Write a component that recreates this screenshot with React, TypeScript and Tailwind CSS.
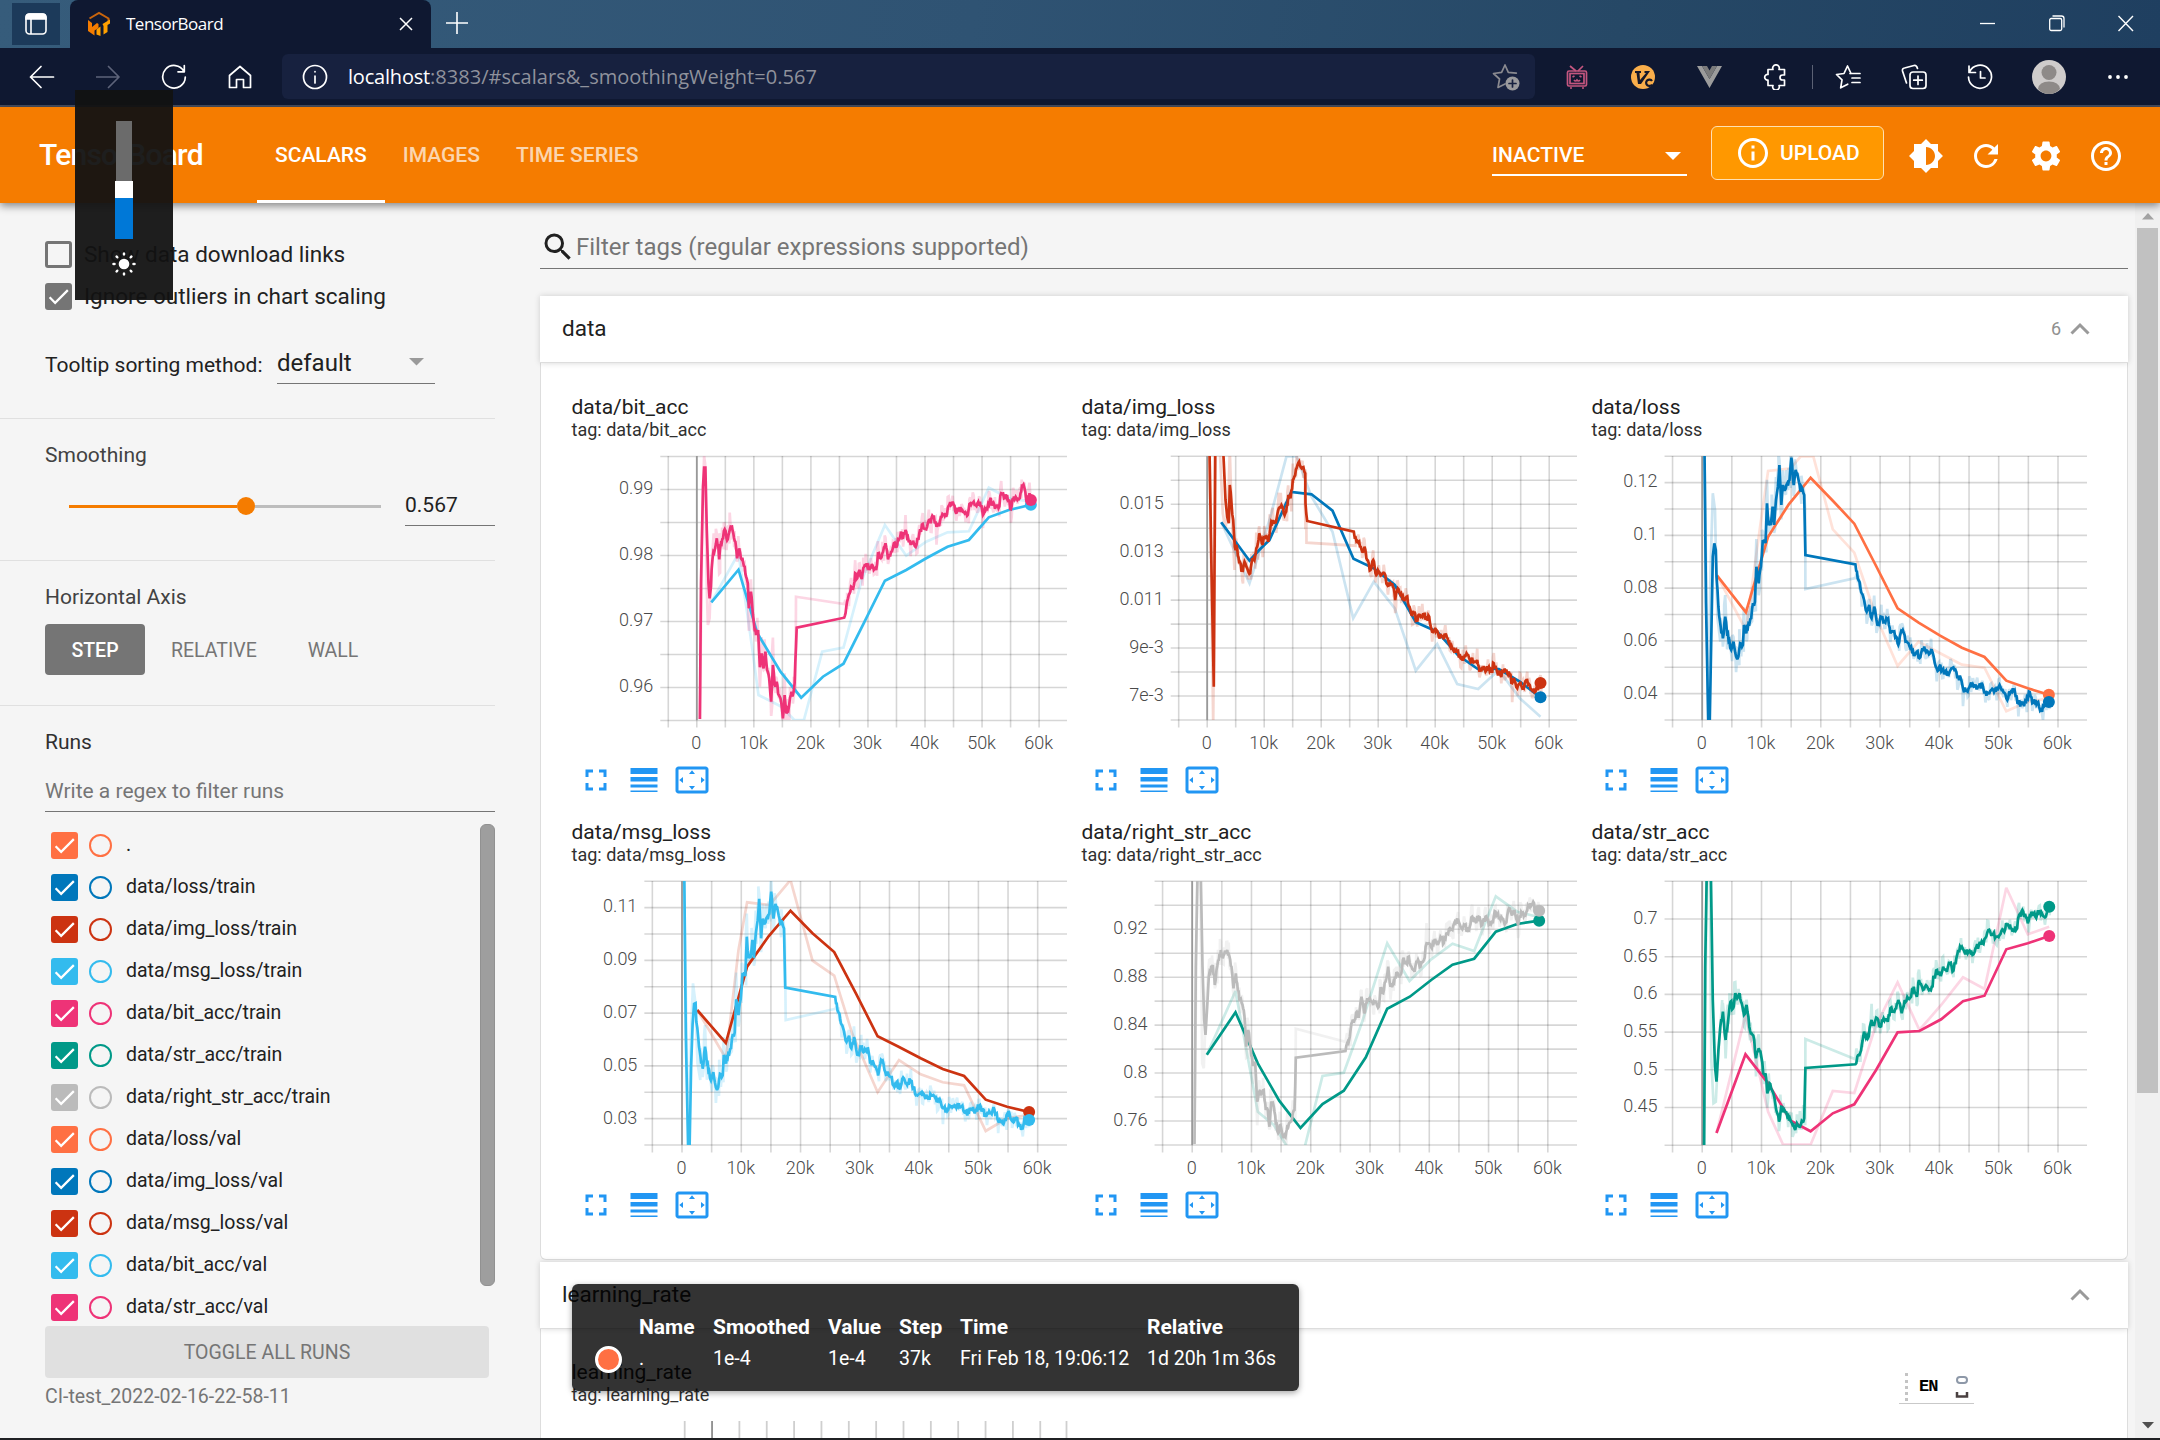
import React from "react";
import {
  MdBrightness6,
  MdCheck,
  MdFullscreen,
  MdHelpOutline,
  MdInfoOutline,
  MdLineWeight,
  MdRefresh,
  MdSearch,
  MdSettings,
  MdSettingsOverscan,
} from "react-icons/md";

type Pt = [number, number];

const ORANGE = "#ff7043";
const BLUE = "#0077bb";
const RED = "#cc3311";
const CYAN = "#33bbee";
const PINK = "#ee3377";
const TEAL = "#009988";
const GREY = "#bbbbbb";

/* ---------- series data ---------- */

const bitTrain: Pt[] = [[463,1047],[466,640],[472,350],[475,293],[479,293],[483,480],[488,640],[491,685],[495,650],[497,600],[502,545],[507,535],[512,505],[516,525],[519,568],[524,520],[530,505],[535,478],[540,505],[546,495],[552,470],[556,470],[560,490],[566,515],[571,565],[577,535],[582,565],[588,575],[593,590],[597,620],[602,640],[605,715],[611,665],[617,735],[622,780],[626,795],[632,780],[637,892],[642,850],[648,895],[653,845],[658,900],[664,925],[670,995],[675,885],[680,945],[686,935],[692,975],[697,985],[704,1045],[709,975],[714,1030],[720,1020],[727,975],[733,975],[738,940],[744,773],[882,743],[888,710],[893,685],[902,650],[908,655],[914,610],[920,625],[927,600],[933,627],[940,590],[947,580],[955,600],[962,582],[968,600],[975,600],[980,550],[988,565],[995,545],[1002,520],[1009,568],[1018,545],[1026,520],[1034,530],[1040,510],[1047,485],[1053,503],[1060,480],[1067,500],[1075,525],[1082,512],[1092,525],[1100,490],[1110,462],[1120,478],[1128,450],[1133,460],[1140,440],[1150,470],[1160,455],[1167,432],[1178,440],[1185,408],[1197,395],[1205,425],[1215,418],[1225,420],[1232,430],[1241,435],[1248,400],[1258,395],[1266,408],[1276,395],[1285,435],[1295,415],[1305,390],[1313,400],[1322,410],[1330,415],[1338,370],[1346,385],[1355,375],[1366,418],[1375,380],[1385,390],[1394,370],[1400,348],[1408,365],[1413,395],[1420,370],[1425,392]];
const bitVal: Pt[] = [[496,697],[575,599],[630,790],[697,905],[757,983],[820,920],[880,881],[940,757],[1000,632],[1062,600],[1120,565],[1182,530],[1244,510],[1302,442],[1360,420],[1424,404]];
const bitValRaw: Pt[] = [[496,697],[575,550],[610,800],[633,975],[700,1010],[737,1050],[765,1050],[818,845],[880,833],[933,630],[1000,465],[1062,557],[1120,515],[1182,487],[1244,484],[1302,353],[1360,385],[1424,395]];

const imgTrain: Pt[] = [[447,240],[453,600],[460,950],[464,240],[488,240],[495,390],[500,440],[505,460],[508,345],[513,400],[518,450],[523,530],[530,535],[536,580],[545,600],[552,575],[560,595],[569,610],[575,565],[582,570],[590,530],[596,490],[604,520],[614,500],[623,515],[630,470],[637,450],[645,460],[655,415],[663,405],[670,430],[677,425],[683,380],[690,385],[697,330],[704,315],[711,285],[718,285],[726,292],[734,310],[735,400],[740,453],[880,485],[888,515],[896,515],[905,545],[912,530],[920,570],[930,600],[938,570],[945,610],[955,605],[963,615],[972,610],[980,645],[990,640],[1000,655],[1004,690],[1012,655],[1022,670],[1030,690],[1038,680],[1047,710],[1055,735],[1062,725],[1068,750],[1078,735],[1088,730],[1097,745],[1106,740],[1115,785],[1125,785],[1135,800],[1145,800],[1157,795],[1168,825],[1178,840],[1188,840],[1200,865],[1210,865],[1218,850],[1228,870],[1240,875],[1250,870],[1257,905],[1265,890],[1275,905],[1285,890],[1293,905],[1300,880],[1310,905],[1320,915],[1330,905],[1345,905],[1355,940],[1362,930],[1370,955],[1380,935],[1390,955],[1400,930],[1408,945],[1415,960],[1425,965],[1440,940]];
const imgVal: Pt[] = [[482,457],[567,572],[596,540],[627,510],[692,366],[753,373],[816,422],[879,566],[940,595],[1003,645],[1066,757],[1130,785],[1192,855],[1252,897],[1315,897],[1378,935],[1440,982]];
const imgValRaw: Pt[] = [[482,457],[567,640],[627,450],[678,259],[708,259],[753,380],[816,485],[878,745],[940,635],[1003,715],[1066,902],[1130,822],[1190,942],[1253,957],[1315,900],[1378,985],[1440,1040]];

const lossTrain: Pt[] = [[356,240],[360,700],[366,1047],[370,1047],[374,800],[378,560],[382,520],[386,540],[388,620],[393,710],[399,770],[405,805],[411,740],[416,790],[422,810],[427,840],[433,815],[440,860],[446,860],[451,820],[458,825],[461,765],[467,790],[473,760],[480,745],[485,700],[490,695],[494,590],[500,640],[506,590],[511,510],[518,520],[522,400],[527,465],[532,465],[537,410],[541,465],[546,390],[551,350],[555,285],[560,405],[565,345],[570,360],[576,340],[582,330],[587,263],[593,345],[598,300],[605,325],[611,365],[616,355],[621,375],[624,555],[757,583],[763,625],[768,635],[774,670],[780,690],[787,725],[794,705],[800,745],[807,710],[813,750],[820,765],[826,740],[834,755],[844,745],[850,790],[858,785],[865,800],[871,825],[877,790],[883,780],[890,815],[898,820],[905,830],[912,855],[920,845],[927,865],[935,835],[942,840],[950,845],[958,840],[965,860],[973,895],[980,890],[988,900],[995,905],[1003,910],[1012,895],[1020,900],[1028,925],[1037,925],[1043,955],[1055,965],[1062,945],[1072,950],[1083,950],[1095,945],[1100,970],[1110,970],[1118,960],[1130,965],[1140,945],[1148,960],[1158,985],[1168,970],[1180,960],[1190,1000],[1200,1000],[1210,1000],[1218,965],[1227,1000],[1236,990],[1245,1010],[1253,1025],[1262,995],[1271,995]];
const lossVal: Pt[] = [[389,616],[466,727],[525,500],[580,403],[638,323],[697,392],[754,461],[812,588],[869,715],[925,758],[982,797],[1040,833],[1100,861],[1158,932],[1215,955],[1271,974]];
const lossValRaw: Pt[] = [[389,616],[466,780],[505,460],[525,303],[585,295],[612,259],[645,259],[697,478],[754,548],[812,740],[869,888],[925,815],[982,850],[1040,884],[1100,893],[1158,1024],[1215,995],[1271,985]];

const msgLevels: Pt[] = [[240,225],[263,275],[400,410],[555,563],[583,591],[745,745],[860,862],[950,920],[1025,985],[1047,1040]];
const relevel = (v: number) => {
  for (let i = 1; i < msgLevels.length; i++) {
    const [a, b] = msgLevels[i - 1];
    const [c, d] = msgLevels[i];
    if (v <= c) return b + ((v - a) / (c - a)) * (d - b);
  }
  return v;
};
/* msg_loss follows the shape of the total loss, apart from the first rebound */
const msgTrain: Pt[] = lossTrain.map(([x, y], i) => [411 + (x - 350) * 1.093, relevel(y) + (i >= 5 && i <= 8 ? 105 - (i - 5) * 22 : 0)]);
const msgVal: Pt[] = [[455,630],[538,729],[600,500],[663,408],[726,332],[790,400],[853,456],[916,580],[979,709],[1040,740],[1104,775],[1168,807],[1230,828],[1293,899],[1355,920],[1419,936]];
const msgValRaw: Pt[] = [[455,630],[538,775],[575,450],[600,307],[665,315],[726,240],[790,482],[853,527],[905,700],[979,877],[1041,780],[1104,823],[1168,847],[1230,856],[1293,993],[1355,955],[1419,945]];

const rightTrain: Pt[] = [[402,1032],[406,500],[411,225],[421,225],[426,500],[431,660],[435,705],[440,620],[445,530],[452,500],[457,495],[463,555],[468,510],[475,480],[481,450],[487,475],[493,455],[500,450],[507,470],[513,500],[519,565],[526,520],[532,570],[539,600],[546,615],[552,650],[557,740],[563,690],[570,740],[577,795],[584,790],[590,905],[596,875],[604,880],[610,870],[616,930],[622,930],[627,980],[632,905],[640,920],[646,970],[653,1000],[660,975],[667,1005],[675,1010],[681,975],[690,965],[697,940],[702,930],[706,773],[855,753],[862,725],[868,710],[875,665],[882,660],[889,635],[895,650],[903,590],[911,640],[920,595],[930,600],[938,615],[945,605],[955,620],[960,565],[968,580],[975,545],[983,500],[990,560],[997,555],[1003,530],[1012,520],[1020,525],[1027,480],[1037,490],[1045,470],[1053,500],[1062,515],[1070,485],[1080,500],[1090,480],[1098,430],[1106,430],[1114,445],[1122,420],[1130,435],[1140,410],[1150,430],[1160,400],[1168,385],[1176,390],[1183,365],[1195,365],[1203,385],[1213,375],[1225,395],[1235,350],[1245,365],[1255,350],[1265,375],[1275,350],[1285,375],[1295,365],[1305,335],[1315,355],[1325,355],[1335,370],[1343,330],[1352,340],[1362,330],[1373,375],[1382,335],[1392,345],[1400,330],[1410,310],[1418,305],[1425,330],[1436,332]];
const rightVal: Pt[] = [[439,764],[525,637],[592,790],[656,902],[720,984],[786,912],[850,872],[916,772],[980,626],[1048,590],[1112,540],[1176,494],[1241,476],[1306,395],[1370,372],[1436,362]];
const rightValRaw: Pt[] = [[439,764],[525,573],[592,935],[640,975],[680,1040],[733,1040],[786,828],[850,818],[905,665],[980,430],[1047,543],[1112,478],[1176,431],[1241,453],[1306,289],[1370,335],[1436,352]];

const strTrain: Pt[] = [[355,1040],[358,500],[362,225],[373,225],[378,600],[384,800],[388,845],[393,750],[398,680],[405,635],[412,720],[418,670],[425,605],[432,625],[438,580],[443,595],[449,580],[455,610],[461,645],[468,615],[475,680],[481,700],[488,720],[493,775],[500,745],[507,770],[512,820],[518,820],[523,880],[529,850],[535,870],[542,895],[548,935],[554,965],[560,920],[568,930],[576,950],[583,955],[590,975],[597,990],[604,975],[612,975],[621,955],[624,804],[757,793],[762,770],[768,765],[774,735],[780,695],[790,715],[800,660],[807,675],[815,655],[823,680],[832,655],[843,665],[850,625],[858,635],[865,625],[871,600],[880,640],[888,600],[897,595],[905,590],[912,560],[920,590],[926,540],[934,560],[942,560],[950,565],[960,560],[966,530],[974,510],[982,525],[990,500],[1000,515],[1008,490],[1015,515],[1023,490],[1030,450],[1040,440],[1048,460],[1058,455],[1068,465],[1076,445],[1085,435],[1095,430],[1102,415],[1110,390],[1120,405],[1130,410],[1140,405],[1150,390],[1160,375],[1170,385],[1184,390],[1192,345],[1203,335],[1215,370],[1225,335],[1235,350],[1247,335],[1258,350],[1271,325]];
const strVal: Pt[] = [[388,999],[465,763],[525,850],[585,962],[638,994],[697,940],[754,913],[812,810],[869,697],[927,693],[985,658],[1043,604],[1100,587],[1158,448],[1215,430],[1272,408]];
const strValRaw: Pt[] = [[388,999],[465,645],[525,935],[565,1034],[638,1034],[697,873],[754,879],[810,680],[869,547],[927,690],[985,615],[1043,532],[1100,567],[1158,263],[1215,403],[1272,380]];

interface ChartSpec {
  name: string;
  /* horizontal samples per pixel, and the sample offset of the drawing */
  k: number;
  ox: number;
  oy: number;
  x0: number;
  step: number;
  gridY: number[];
  labels: [string, number][];
  train: Pt[];
  trainColor: string;
  rawHead: Pt[];
  rawFlat: Pt[];
  val: Pt[];
  valRaw: Pt[];
  valColor: string;
  trainEnd: Pt;
  valEnd: Pt;
}

const range = (n: number, a: number, d: number) => Array.from({ length: n }, (_, i) => a + i * d);

const charts: ChartSpec[] = [
  {
    name: "data/bit_acc", k: 2.904, ox: -31.5, oy: -86, x0: 124.8, step: 57.05,
    gridY: range(9, 0.5, 33), labels: [["0.99", 33], ["0.98", 99], ["0.97", 165], ["0.96", 231]],
    train: bitTrain, trainColor: PINK, rawHead: [[463,1047],[470,450],[475,259],[478,280],[483,660],[486,765],[491,745],[496,600],[503,490]], rawFlat: [[742,680],[882,702]],
    val: bitVal, valRaw: bitValRaw, valColor: CYAN, trainEnd: [1424,390], valEnd: [1424,404],
  },
  {
    name: "data/img_loss", k: 3, ox: -21.5, oy: -86, x0: 125.2, step: 57,
    gridY: range(12, 0.3, 23.97), labels: [["0.015", 48], ["0.013", 96], ["0.011", 144], ["9e-3", 192], ["7e-3", 240]],
    train: imgTrain, trainColor: RED, rawHead: [[447,240],[458,1060],[466,240],[478,240],[487,430],[495,480],[503,400],[508,240],[514,440],[522,600]], rawFlat: [[738,518],[885,527]],
    val: imgVal, valRaw: imgValRaw, valColor: BLUE, trainEnd: [1440,939], valEnd: [1440,982],
  },
  {
    name: "data/loss", k: 2.657, ox: -21.5, oy: -86, x0: 110.2, step: 59.3,
    gridY: range(11, 0.3, 26.37), labels: [["0.12", 26.4], ["0.1", 79.1], ["0.08", 132], ["0.06", 185], ["0.04", 237.6]],
    train: lossTrain, trainColor: BLUE, rawHead: [[356,240],[366,1047],[372,600],[378,370],[384,420],[390,740],[398,815]], rawFlat: [[624,657],[757,624]],
    val: lossVal, valRaw: lossValRaw, valColor: ORANGE, trainEnd: [1271,996], valEnd: [1271,974],
  },
  {
    name: "data/msg_loss", k: 2.904, ox: -31.5, oy: -81, x0: 110, step: 59.28,
    gridY: range(11, 0.3, 26.37), labels: [["0.11", 26.4], ["0.09", 79.1], ["0.07", 132], ["0.05", 185], ["0.03", 237.6]],
    train: msgTrain, trainColor: CYAN, rawHead: [[416,225],[430,1040],[437,700],[443,550],[449,600],[456,790],[464,840]], rawFlat: [[712,660],[857,626]],
    val: msgVal, valRaw: msgValRaw, valColor: RED, trainEnd: [1419,960], valEnd: [1419,936],
  },
  {
    name: "data/right_str_acc", k: 3, ox: -21.5, oy: -81, x0: 110.2, step: 59.27,
    gridY: range(12, 0.3, 23.97), labels: [["0.92", 48], ["0.88", 96], ["0.84", 144], ["0.8", 192], ["0.76", 240]],
    train: rightTrain, trainColor: GREY, rawHead: [[402,1032],[410,225],[419,225],[425,790],[430,805],[437,600],[446,480]], rawFlat: [[706,686],[855,725]],
    val: rightVal, valRaw: rightValRaw, valColor: TEAL, trainEnd: [1436,332], valEnd: [1436,362],
  },
  {
    name: "data/str_acc", k: 2.657, ox: -21.5, oy: -81, x0: 110.2, step: 59.3,
    gridY: range(8, 0.3, 37.7), labels: [["0.7", 37.8], ["0.65", 75.5], ["0.6", 113.2], ["0.55", 151], ["0.5", 188.6], ["0.45", 226.4]],
    train: strTrain, trainColor: TEAL, rawHead: [[355,1040],[362,225],[370,225],[374,780],[380,910],[386,905],[392,780],[403,600]], rawFlat: [[624,717],[757,778]],
    val: strVal, valRaw: strValRaw, valColor: PINK, trainEnd: [1272,320], valEnd: [1272,408],
  },
];

/* small seeded generator, so that every render draws the same noise */
const rng = (seed: number) => () => {
  seed = (seed * 1664525 + 1013904223) >>> 0;
  return seed / 4294967296;
};

function jitter(pts: Pt[], amp: number, seed: number, skipTo: number): Pt[] {
  const rand = rng(seed);
  const out: Pt[] = [];
  for (let i = 0; i < pts.length - 1; i++) {
    const [x1, y1] = pts[i];
    const [x2, y2] = pts[i + 1];
    out.push([x1, y1]);
    const gap = x2 - x1;
    if (gap > 60 || x1 < skipTo) continue;
    const n = Math.max(1, Math.round(gap / 2.4));
    for (let j = 1; j < n; j++) {
      const t = j / n;
      const r = (rand() - 0.5) * 2;
      out.push([x1 + gap * t, y1 + (y2 - y1) * t + r * amp]);
    }
  }
  out.push(pts[pts.length - 1]);
  return out;
}

function rawOf(c: ChartSpec): Pt[] {
  const headEnd = c.rawHead[c.rawHead.length - 1][0];
  const jump = c.train.findIndex((p, i) => i + 1 < c.train.length && c.train[i + 1][0] - p[0] > 60);
  const before = c.train.slice(0, jump).filter((p) => p[0] > headEnd);
  const after = c.train.slice(jump + 2);
  const rand = rng(91);
  const spread = (pts: Pt[], amp: number): Pt[] =>
    pts.flatMap(([x, y], i): Pt[] => {
      const prev = pts[i - 1]?.[1] ?? y;
      const push = (y - prev) * 0.6;
      const spike = rand() > 0.86 ? 2 : 1;
      return [
        [x - 2.5, y - rand() * amp * 0.7],
        [x, y + push + (rand() - 0.5) * amp * spike],
        [x + 2.5, y + rand() * amp * 0.7],
      ];
    });
  return [...c.rawHead, ...spread(before, 62), ...c.rawFlat, ...spread(after, 42)];
}

function Chart({ c }: { c: ChartSpec }) {
  const X = (x: number) => x / c.k + c.ox;
  const Y = (y: number) => y / 3 + c.oy;
  const path = (pts: Pt[]) => pts.map(([x, y], i) => `${i ? "L" : "M"}${X(x).toFixed(1)} ${Y(y).toFixed(1)}`).join("");
  const left = c.x0 - c.step / 2;
  const id = `clip-${c.name.replace(/\W/g, "-")}`;
  const sets = [
    { p: path(c.valRaw), color: c.valColor, o: 0.2 },
    { p: path(rawOf(c)), color: c.trainColor, o: 0.2 },
    { p: path(c.val), color: c.valColor, o: 1 },
    { p: path(jitter(c.train, 10, 7, c.train[8][0])), color: c.trainColor, o: 1 },
  ];
  return (
    <svg width="510" height="304" className="block overflow-visible">
      <defs>
        <clipPath id={id}>
          <rect x={left} y="0" width={495 - left} height="264" />
        </clipPath>
      </defs>
      <g stroke="#000" strokeOpacity="0.16" strokeWidth="1.6">
        {c.gridY.map((y) => (
          <line key={y} x1={left - 8} x2={495} y1={y} y2={y} />
        ))}
        {range(14, 0, 1).map((i) => (
          <line key={i} x1={Math.min(left + (i * c.step) / 2, 494.5)} x2={Math.min(left + (i * c.step) / 2, 494.5)} y1="0" y2="271.5" />
        ))}
      </g>
      <line x1={c.x0} x2={c.x0} y1="0" y2="264" stroke="#999" strokeWidth="1.8" />
      <g clipPath={`url(#${id})`} fill="none" strokeWidth="2.7" strokeLinejoin="miter" strokeMiterlimit="3">
        {sets.map((s, i) => (
          <path key={i} d={s.p} stroke={s.color} strokeOpacity={s.o} />
        ))}
      </g>
      <circle cx={X(c.valEnd[0])} cy={Y(c.valEnd[1])} r="6" fill={c.valColor} />
      <circle cx={X(c.trainEnd[0])} cy={Y(c.trainEnd[1])} r="6" fill={c.trainColor} />
      <g fill="#4a4a4a" fontSize="18" fontWeight="300" fontFamily="Roboto, sans-serif">
        {c.labels.map(([t, y]) => (
          <text key={t} x={left - 15} y={y + 5} textAnchor="end">{t}</text>
        ))}
        {range(7, 0, 1).map((i) => (
          <text key={i} x={c.x0 - 0.5 + i * c.step} y="292.5" textAnchor="middle">{i ? `${i}0k` : "0"}</text>
        ))}
      </g>
    </svg>
  );
}

function ChartCard({ c }: { c: ChartSpec }) {
  return (
    <div className="h-[425px] w-[510px]">
      <div className="h-[27px] text-[21px] leading-[27px] text-[#212121]">{c.name}</div>
      <div className="h-[35px] text-[18px] leading-[18px] text-[#303030]">tag: {c.name}</div>
      <Chart c={c} />
      <div className="mt-[2px] ml-[6px] flex gap-[12px] text-[36px] text-[#2196f3]">
        <MdFullscreen />
        <MdLineWeight />
        <MdSettingsOverscan />
      </div>
    </div>
  );
}

/* ---------- browser frame ---------- */

function BrowserTabs() {
  return (
    <div className="flex h-12 items-start bg-[linear-gradient(100deg,#365c7b_0%,#2f5373_45%,#264866_75%,#1f3f60_100%)] text-white">
      <div className="mt-[3px] ml-3 flex h-[42px] w-12 items-center justify-center bg-[#1c3a5a]">
        <svg width="24" height="24" viewBox="0 0 24 24" fill="none" stroke="#fff" strokeWidth="1.6">
          <rect x="2" y="2" width="20" height="20" rx="3.5" />
          <path d="M2 7V5.500Q2 2 5.500 2h13Q22 2 22 5.500V7z" fill="#fff" />
          <path d="M7 7v15" />
        </svg>
      </div>
      <div className="ml-[10px] flex h-12 w-[361px] items-center rounded-t-lg bg-[#0f1831] pl-[17px]">
        <svg width="24" height="26" viewBox="0 0 24 26">
          <path d="M2.500 7.500 12 2l9.500 5.500v3" fill="none" stroke="#c8640c" strokeWidth="2" />
          <path d="M1 9l4 3v4l5-4 1.500 1v4l-4 2.500v5L1 20z" fill="#f57c00" />
          <path d="M9.500 18.500l4-3V25l-4-1.500zM15.500 13 23 8.500v4l-2.500 1.500v7l-4 2.500V15z" fill="#ffa000" />
        </svg>
        <span className="ml-[15px] w-[260px] font-['Open_Sans'] text-[17px] tracking-[-0.5px]">TensorBoard</span>
        <svg className="ml-[13px]" width="14" height="14" viewBox="0 0 14 14" stroke="#fff" strokeWidth="1.500">
          <path d="M1 1l12 12M13 1L1 13" />
        </svg>
      </div>
      <svg className="mt-[12px] ml-[15px]" width="22" height="22" viewBox="0 0 22 22" stroke="#fff" strokeWidth="1.600">
        <path d="M11 0v22M0 11h22" />
      </svg>
      <div className="mt-[15px] ml-auto mr-[26px] flex gap-[53px]">
        <svg width="16" height="17" viewBox="0 0 16 17" stroke="#fff" strokeWidth="1.300"><path d="M0 8.500h15" /></svg>
        <svg width="16" height="17" viewBox="0 0 16 17" fill="none" stroke="#fff" strokeWidth="1.300">
          <rect x="0.700" y="3.500" width="12" height="12" rx="1.500" />
          <path d="M3.500 1h9Q15 1 15 3.500v9" />
        </svg>
        <svg width="16" height="17" viewBox="0 0 16 17" stroke="#fff" strokeWidth="1.400"><path d="M.500 1l14.500 15M15 1L.500 16" /></svg>
      </div>
    </div>
  );
}

const line = { fill: "none", stroke: "#fff", strokeWidth: 1.7, strokeLinecap: "round", strokeLinejoin: "round" } as const;

function BrowserBar() {
  return (
    <div className="flex h-[59px] items-center border-b-2 border-[#454c5e] bg-[#0f1831] pl-[29px]">
      <div className="flex w-[253px] items-center gap-[41px]">
        <svg width="26" height="24" viewBox="0 0 26 24" {...line}><path d="M24.500 12H1.500M12 1.500 1.500 12 12 22.500" /></svg>
        <svg width="24" height="24" viewBox="0 0 24 24" {...line} stroke="#5d6379"><path d="M0 12h22.500M12.500 1.500 23 12 12.500 22.500" /></svg>
        <svg width="26" height="26" viewBox="0 0 26 26" {...line}><path d="M23 7.500A11.300 11.300 0 1 0 24.300 13M23.300 1.500v6.300h-6.300" /></svg>
        <svg width="24" height="24" viewBox="0 0 24 24" {...line}><path d="M1.500 10.500 12 1.500l10.500 9v12h-7v-8h-7v8h-7z" /></svg>
      </div>
      <div className="flex h-[45px] w-[1253px] items-center rounded-md bg-[#17213f] pl-5 pr-[14px]">
        <svg width="26" height="26" viewBox="0 0 26 26" {...line}><circle cx="13" cy="13" r="11.500" /><path d="M13 12v7M13 7.500v.300" /></svg>
        <span className="ml-[20px] font-['Open_Sans'] text-[20px] tracking-[0.03px] text-[#8f929c]">
          <span className="tracking-[-0.2px] text-white">localhost</span>:8383/#scalars&amp;_smoothingWeight=0.567
        </span>
        <svg className="ml-auto" width="30" height="28" viewBox="0 0 30 28" {...line} stroke="#8a8a90">
          <path d="M14 2l3.300 7.300 8 .9M14 2l-3.400 7.300L2.500 10.500l6 5.500L7 24.500l7-3.500" />
          <circle cx="21.500" cy="20.500" r="7" fill="#9a9a9d" stroke="none" />
          <path d="M21.500 17v7M18 20.500h7" stroke="#17213f" />
        </svg>
      </div>
      <div className="ml-[29px] flex items-center">
        <svg width="26" height="26" viewBox="0 0 26 26" fill="none" stroke="#c4567f" strokeWidth="1.700">
          <path d="M6 2l6 5M19 2l-5 5" /><rect x="3.500" y="7" width="19" height="15" rx="1.500" /><rect x="6" y="9.500" width="14" height="10" />
          <path d="M8.500 13l2-1M17.500 13l-2-1M10 16q1.500 2 3 0 1.500 2 3 0M6 24h2M18 24h2" />
        </svg>
        <svg className="ml-[40px]" width="26" height="26" viewBox="0 0 26 26">
          <circle cx="13" cy="13" r="12" fill="#f9ae4b" />
          <path d="M5 7h6v2H9.500l.5 7L16 9h-1.500V7H20L11 20H8L6.500 9H5z" fill="#15182a" />
          <path d="M22 17a3.200 3.200 0 1 0 0 3.500" stroke="#15182a" strokeWidth="2.200" fill="none" />
        </svg>
        <svg className="ml-[41px]" width="25" height="22" viewBox="0 0 25 22"><path d="M0 0h5l7.500 13L20 0h5L12.500 22z" fill="#9c9c9c" /><path d="M5 0h5l2.500 4.500L15 0h5l-7.500 13z" fill="#7b7b7b" /></svg>
        <svg className="ml-[41px]" width="26" height="26" viewBox="0 0 26 26" {...line}>
          <path d="M5 5.500h5a3.300 3.300 0 1 1 6 0h5.500v5.500h-2a2.500 2.500 0 1 0 0 5h2v5.500h-5.500a3.300 3.300 0 1 1-6 0H5V16a2.800 2.800 0 1 1 0-5.500z" />
        </svg>
        <div className="ml-[23px] h-6 w-px bg-[#5b6174]" />
        <svg className="ml-[22px]" width="26" height="26" viewBox="0 0 26 26" {...line}>
          <path d="M15 9.500h10M17 14h8M17 18.500h8M16 9.500 12.500 2 9 9.500l-7.500 1 5.500 5.300-1.300 8 7-3.600" />
        </svg>
        <svg className="ml-[40px]" width="26" height="26" viewBox="0 0 26 26" {...line}>
          <rect x="9" y="8" width="16" height="16.500" rx="3" /><path d="M17 12v8.500M12.700 16.200h8.600M5.500 19 1.500 7Q1 4.500 3.500 4L13 1.500Q15.500 1 16.500 4.500" />
        </svg>
        <svg className="ml-[40px]" width="26" height="26" viewBox="0 0 26 26" {...line}>
          <path d="M2 2v6.500h6.500M2.500 8A11.500 11.500 0 1 1 1.500 13M13.500 7.500V14h4.500" />
        </svg>
        <svg className="ml-[39px]" width="34" height="34" viewBox="0 0 34 34">
          <circle cx="17" cy="17" r="17" fill="#cfcccb" /><ellipse cx="17" cy="12.500" rx="7.500" ry="7.500" fill="#8e8a88" />
          <path d="M6 29q1-7.500 11-7.500T28 29q-4.500 5-11 5T6 29z" fill="#8e8a88" />
        </svg>
        <svg className="ml-[42px]" width="20" height="6" viewBox="0 0 20 6" fill="#fff"><circle cx="2" cy="3" r="1.900" /><circle cx="10" cy="3" r="1.900" /><circle cx="18" cy="3" r="1.900" /></svg>
      </div>
    </div>
  );
}

/* ---------- TensorBoard ---------- */

function Toolbar() {
  return (
    <header className="relative z-10 flex h-24 shrink-0 items-stretch bg-[#f57c00] font-medium text-white shadow-[0_3px_8px_rgba(0,0,0,0.45)]">
      <div className="ml-[39px] w-[218px] text-[30px] leading-[95px] tracking-[-0.025em]">TensorBoard</div>
      <nav className="flex text-[21px] leading-[96px]">
        <div className="border-b-[3px] border-white px-[18px]"><div className="h-[93px]">SCALARS</div></div>
        <div className="px-[18px] text-white/70">IMAGES</div>
        <div className="px-[18px] text-white/70">TIME SERIES</div>
      </nav>
      <div className="ml-auto flex h-full items-start">
        <div className="mt-[27px] flex h-[42px] w-[195px] items-center justify-between border-b-2 border-white pr-[6px] text-[21px]">
          <span className="pt-[3px]">INACTIVE</span>
          <svg className="mt-[3px]" width="16" height="8" viewBox="0 0 16 8"><path d="M0 0h16L8 8z" fill="#fff" /></svg>
        </div>
        <div className="mt-[19px] ml-6 flex h-[54px] w-[173px] items-center rounded-md border border-[#ffe0b2] bg-[#ff9800] pl-[23px] text-[21px]">
          <MdInfoOutline size={36} />
          <span className="ml-[9px] pt-px">UPLOAD</span>
        </div>
        <div className="mt-[31px] ml-[24px] mr-9 flex gap-6 text-[36px]">
          <MdBrightness6 /><MdRefresh /><MdSettings /><MdHelpOutline />
        </div>
      </div>
    </header>
  );
}

const runs: [string, string][] = [
  [".", ORANGE], ["data/loss/train", BLUE], ["data/img_loss/train", RED], ["data/msg_loss/train", CYAN],
  ["data/bit_acc/train", PINK], ["data/str_acc/train", TEAL], ["data/right_str_acc/train", GREY], ["data/loss/val", ORANGE],
  ["data/img_loss/val", BLUE], ["data/msg_loss/val", RED], ["data/bit_acc/val", CYAN], ["data/str_acc/val", PINK],
];

function Sidebar() {
  return (
    <aside className="flex w-[495px] shrink-0 flex-col">
      <section className="h-[216px] border-b border-[#e0e0e0] pt-[38px] pl-[45px] text-[#212121]">
        <div className="flex h-[27px] items-center text-[22.5px]">
          <div className="size-[27px] rounded-[3px] border-[3px] border-[#757575]" />
          <span className="ml-3">Show data download links</span>
        </div>
        <div className="mt-[15px] flex h-[27px] items-center text-[22.5px]">
          <div className="flex size-[27px] items-center justify-center rounded-[3px] bg-[#757575] text-white"><MdCheck size={27} /></div>
          <span className="ml-3">Ignore outliers in chart scaling</span>
        </div>
        <div className="mt-[30px] flex h-[44px] text-[21px]">
          <span className="w-[232px] leading-[50px]">Tooltip sorting method:</span>
          <div className="flex w-[158px] items-center justify-between border-b border-[#757575] pr-[11px] text-[24px]">
            <span className="pt-0.5">default</span>
            <svg className="mt-px" width="15" height="8" viewBox="0 0 15 8"><path d="M0 0h15L7.500 7.500z" fill="#9a9a9a" /></svg>
          </div>
        </div>
      </section>
      <section className="h-[142px] border-b border-[#e0e0e0] pt-[24px] pl-[45px] text-[21px] text-[#424242]">
        <div className="leading-6">Smoothing</div>
        <div className="mt-[17px] flex h-[42px] pl-6">
          <div className="flex h-[44px] w-[312px] items-center">
            <div className="h-[3px] w-[168px] bg-[#f57c00]" />
            <div className="size-[18px] rounded-full bg-[#f57c00]" />
            <div className="h-[3px] w-[126px] bg-[#bdbdbd]" />
          </div>
          <div className="ml-6 h-[42px] w-[90px] border-b border-[#757575] leading-[42px] text-[#212121]">0.567</div>
        </div>
      </section>
      <section className="h-[145px] border-b border-[#e0e0e0] pt-[24px] pl-[45px] text-[21px] text-[#424242]">
        <div className="leading-6">Horizontal Axis</div>
        <div className="mt-[15px] flex h-[51px] items-center text-[19.5px] text-[#757575]">
          <div className="flex h-[51px] w-[100px] items-center justify-center rounded-[4px] bg-[#757575] pt-[2px] font-medium text-white">STEP</div>
          <span className="ml-[26px] pt-[2px]">RELATIVE</span>
          <span className="ml-[51px] pt-[2px]">WALL</span>
        </div>
      </section>
      <section className="flex h-[732px] flex-col pt-[24px] pl-[45px]">
        <div className="text-[21px] leading-6 text-[#303030]">Runs</div>
        <div className="mt-[15px] h-[43px] border-b border-[#757575] text-[21px] leading-[44px] text-[#757575]">Write a regex to filter runs</div>
        <div className="mt-[12px] flex h-[502px] justify-between overflow-hidden">
          <div className="pl-[6px]">
            {runs.map(([name, color]) => (
              <div key={name} className="flex h-[42px] items-center">
                <div className="flex size-[27px] items-center justify-center rounded-[3px] text-white" style={{ background: color }}><MdCheck size={27} /></div>
                <div className="ml-[11px] size-[23px] rounded-full border-2" style={{ borderColor: color }} />
                <span className="ml-[14px] text-[19.5px] text-[#212121]">{name}</span>
              </div>
            ))}
          </div>
          <div className="h-[462px] w-[15px] rounded-md border border-[#919191] bg-[#9e9e9e]" />
        </div>
        <div className="flex h-[52px] w-[444px] items-center justify-center rounded-[4px] bg-[#e0e0e0] pt-px text-[19.5px] text-[#757575]">TOGGLE ALL RUNS</div>
        <div className="mt-[7px] text-[19.5px] leading-6 text-[#757575]">CI-test_2022-02-16-22-58-11</div>
      </section>
    </aside>
  );
}

function Chevron() {
  return (
    <svg width="20" height="13" viewBox="0 0 20 13"><path d="M1.500 11.500 10 3l8.500 8.500" fill="none" stroke="#9a9a9a" strokeWidth="3" /></svg>
  );
}

function PanelHeader({ title, count }: { title: string; count?: string }) {
  return (
    <div className="relative flex h-[67px] items-center border-b border-[#ddd] bg-white pr-[38px] pb-px pl-[22px] shadow-[0_0_6px_rgba(0,0,0,0.16)]">
      <span className="text-[22.5px] text-[#212121]">{title}</span>
      <span className="ml-auto mr-[9px] text-[18px] text-[#909090]">{count}</span>
      <Chevron />
    </div>
  );
}

function Main() {
  return (
    <main className="w-[1588px] shrink-0">
      <div className="mt-[20px] flex h-[46px] items-center border-b border-[#757575] pt-[3px] text-[24px] text-[#757575]">
        <MdSearch size={36} color="#212121" />
        <span>Filter tags (regular expressions supported)</span>
      </div>
      <div className="mt-[27px]">
        <PanelHeader title="data" count="6" />
        <div className="flex h-[897px] flex-wrap content-start rounded-b-md border border-t-0 border-[#ddd] bg-white pt-[30.500px] pl-[30.500px]">
          {charts.map((c) => <ChartCard key={c.name} c={c} />)}
        </div>
      </div>
      <div className="mt-[2px]">
        <PanelHeader title="learning_rate" />
        <div className="h-[110px] border-x border-[#ddd] bg-white pt-[30px] pl-[30.500px]">
          <div className="h-[27px] text-[21px] leading-[27px] text-[#212121]">learning_rate</div>
          <div className="h-[35px] text-[18px] leading-[18px] text-[#303030]">tag: learning_rate</div>
          <svg width="496" height="20" className="block">
            {range(15, 0, 1).map((i) => (
              <line key={i} x1={Math.min(112.7 + i * 27.35, 494.5)} x2={Math.min(112.7 + i * 27.35, 494.5)} y1="0" y2="20" stroke={i === 1 ? "#8d8d8d" : "#cfcfcf"} strokeWidth="1.800" />
            ))}
          </svg>
        </div>
      </div>
    </main>
  );
}

function BrightnessOverlay() {
  return (
    <div className="absolute top-[90px] left-[75px] z-20 flex h-[210px] w-[98px] flex-col items-center bg-[#121212]/95 pt-[31px]">
      <div className="h-[60px] w-4 bg-[#6b6b6b]" />
      <div className="h-[17px] w-[18px] bg-white" />
      <div className="h-[41px] w-[18px] bg-[#0078d7]" />
      <svg className="mt-[13px]" width="24" height="24" viewBox="-12 -12 24 24">
        <circle r="5.300" fill="#fff" />
        {range(8, 0, 45).map((a) => (
          <ellipse key={a} cx="0" cy="-10" rx="1.300" ry="1.800" fill="#fff" transform={`rotate(${a})`} />
        ))}
      </svg>
    </div>
  );
}

function TooltipCell({ className, head, value }: { className: string; head: string; value: string }) {
  return (
    <div className={className}>
      <div className="text-[21px] leading-[31px] font-bold">{head}</div>
      <div className="text-[19.5px] leading-[31px]">{value}</div>
    </div>
  );
}

function Tooltip() {
  return (
    <div className="absolute top-[1284px] left-[572px] z-20 flex h-[107px] w-[727px] rounded-md bg-black/80 pt-[28px] pl-[23px] whitespace-nowrap text-white shadow-[0_2px_6px_rgba(0,0,0,0.35)]">
      <div className="mt-[34px] size-[27px] rounded-full border-[3px] border-white bg-[#ff7043]" />
      <TooltipCell className="ml-[17px] w-[74px]" head="Name" value="." />
      <TooltipCell className="w-[115px]" head="Smoothed" value="1e-4" />
      <TooltipCell className="w-[71px]" head="Value" value="1e-4" />
      <TooltipCell className="w-[61px]" head="Step" value="37k" />
      <TooltipCell className="w-[187px]" head="Time" value="Fri Feb 18, 19:06:12" />
      <TooltipCell className="w-[135px]" head="Relative" value="1d 20h 1m 36s" />
    </div>
  );
}

function LanguageBar() {
  return (
    <div className="absolute top-[1371px] left-[1899px] z-20 flex h-[33px] w-[75px] items-center border-b border-[#c9c9c9] bg-white pl-[6px]">
      <div className="h-[28px] border-l-[3px] border-dotted border-[#c4c4c4]" />
      <span className="ml-[11px] w-[36px] font-['Liberation_Mono'] text-[17px] tracking-[-1px] font-bold text-black">EN</span>
      <svg width="14" height="26" viewBox="0 0 14 26" fill="none" stroke="#6b6b78" strokeWidth="2">
        <rect x="2" y="3" width="10" height="6" rx="3" stroke="#8d98a8" />
        <path d="M2 18v4.500h10V18" stroke="#4a4040" strokeWidth="2.500" />
      </svg>
    </div>
  );
}

export default function App() {
  return (
    <div className="relative flex h-[1440px] w-[2160px] flex-col overflow-hidden border-b-2 border-[#202124] bg-[#f5f5f5] font-[Roboto,sans-serif] whitespace-nowrap">
      <div className="shrink-0">
        <BrowserTabs />
        <BrowserBar />
      </div>
      <Toolbar />
      <div className="flex min-h-0 flex-1 overflow-hidden">
        <Sidebar />
        <div className="w-[45px] shrink-0" />
        <Main />
        <div className="ml-[7px] flex w-[25px] shrink-0 flex-col items-center bg-[#f0f0f0]">
          <svg className="mt-[10px]" width="12" height="7" viewBox="0 0 12 7"><path d="M0 6.500h12L6 0z" fill="#a3a3a3" /></svg>
          <div className="mt-[8px] h-[865px] w-[21px] bg-[#c1c1c1]" />
          <svg className="mt-[329px]" width="12" height="7" viewBox="0 0 12 7"><path d="M0 0h12L6 6.500z" fill="#505050" /></svg>
        </div>
      </div>
      <BrightnessOverlay />
      <Tooltip />
      <LanguageBar />
    </div>
  );
}
